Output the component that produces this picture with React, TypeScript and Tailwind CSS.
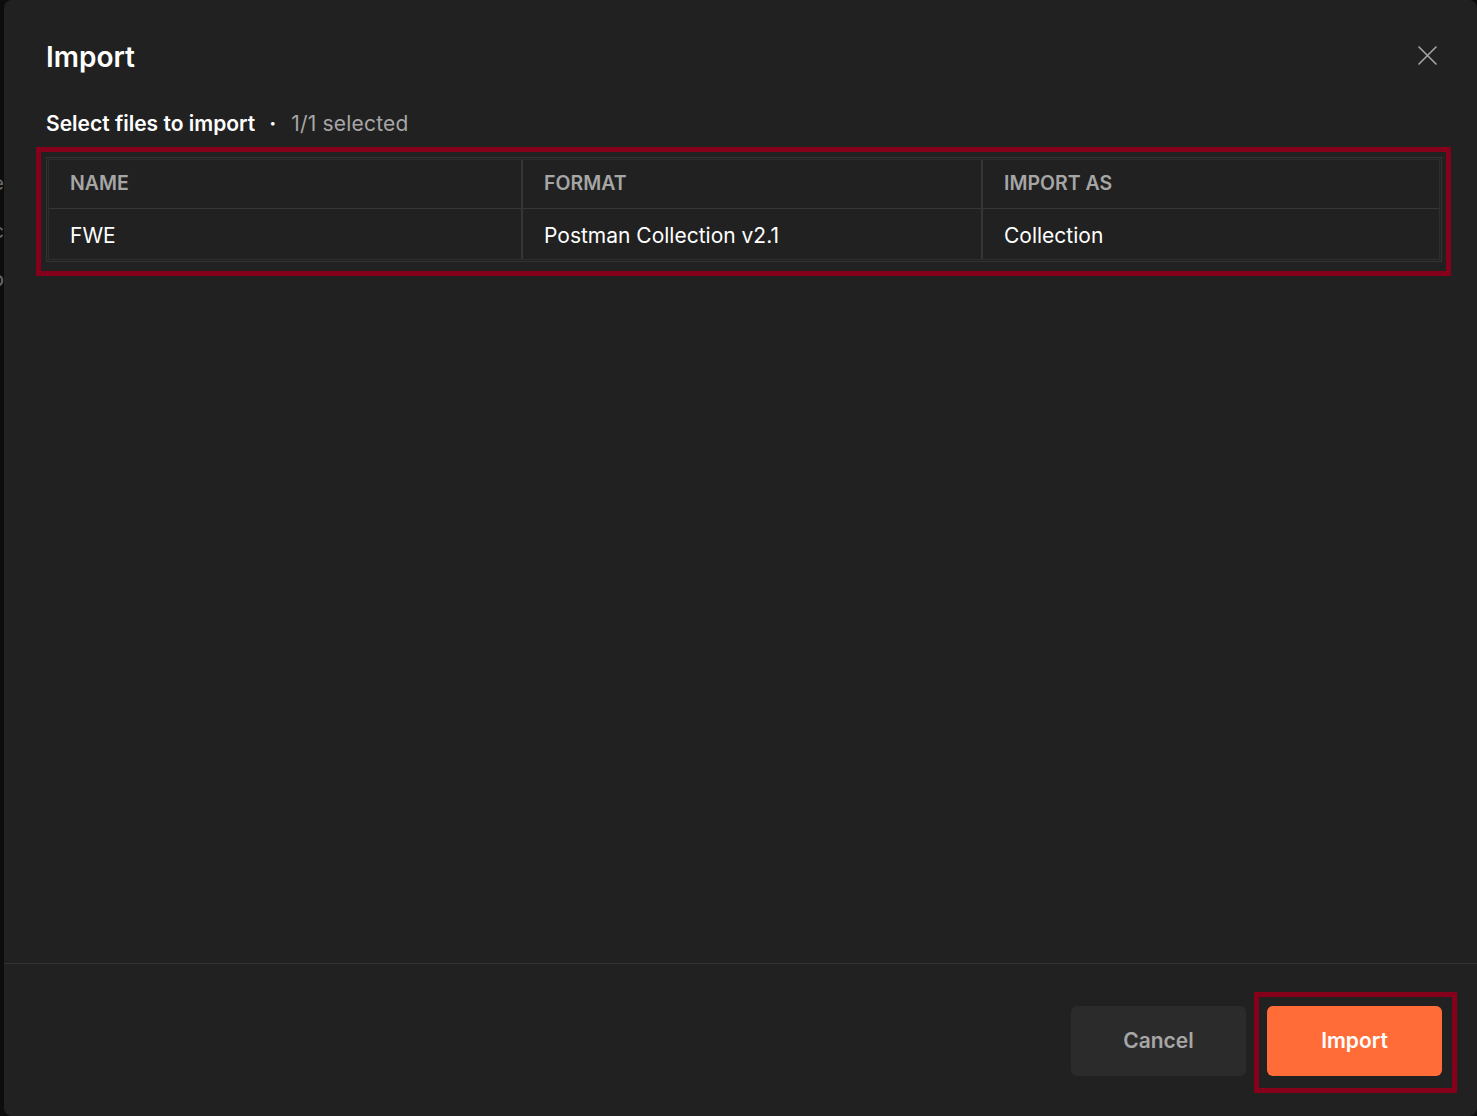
import React from "react";

const COLUMNS = ["NAME", "FORMAT", "IMPORT AS"];
const ROW = ["FWE", "Postman Collection v2.1", "Collection"];

function CloseIcon() {
  return (
    <svg width="19" height="19" viewBox="0 0 19 19" fill="none" stroke="#a6a6a6" strokeWidth="1.6" strokeLinecap="round">
      <path d="M1 1L18 18M18 1L1 18" />
    </svg>
  );
}

export default function App() {
  return (
    <div className="flex h-[1116px] w-[1477px] overflow-hidden bg-[#0d0d0d]" style={{ fontFamily: "Inter, 'Noto Sans', sans-serif" }}>
      {/* backdrop edge behind the modal */}
      <div className="flex w-[4px] shrink-0 flex-col items-end overflow-hidden pt-[159px] text-[20px] leading-[48px] text-[#6b6b6b]">
        <span className="whitespace-nowrap">Home</span>
        <span className="whitespace-nowrap">Sync</span>
        <span className="whitespace-nowrap">Help</span>
      </div>

      <div className="flex flex-1 flex-col rounded-[8px] bg-[#212121]">
        <div className="flex flex-1 flex-col pl-[42px] pr-[35px] pt-[37px]">
          <div className="flex items-center justify-between">
            <h1 className="text-[28px] font-semibold leading-[40px] text-white">Import</h1>
            <button className="-mt-[3px] mr-[5px]">
              <CloseIcon />
            </button>
          </div>

          <div className="mt-[33px] flex items-center text-[21px] leading-[28px]">
            <span className="font-semibold text-white">Select files to import</span>
            <span className="ml-[14px] mr-[15px] font-bold text-white">·</span>
            <span className="tracking-[0.2px] text-[#a6a6a6]">1/1 selected</span>
          </div>

          <div className="-ml-[10px] -mr-[9px] mt-[9px] border-[5px] border-[#85001a] pb-[9px] pl-[5px] pr-[4px] pt-[5px]">
            <div className="border border-[#333333] p-px">
              <div className="grid grid-cols-[472px_460px_1fr] border border-[#2e2e2e]">
                {COLUMNS.map((col, i) => (
                  <div
                    key={col}
                    className={
                      i === 0
                        ? "flex h-[49px] items-center border-b border-[#363636] px-[21px] text-[19.5px] font-semibold text-[#a6a6a6]"
                        : "flex h-[49px] items-center border-b border-l-2 border-[#363636] px-[21px] text-[19.5px] font-semibold text-[#a6a6a6]"
                    }
                  >
                    {col}
                  </div>
                ))}
                {ROW.map((cell, i) => (
                  <div
                    key={cell}
                    className={
                      i === 0
                        ? "flex h-[50px] items-center px-[21px] pt-[4px] text-[21px] text-white"
                        : "flex h-[50px] items-center border-l-2 border-[#363636] px-[21px] pt-[4px] text-[21px] text-white"
                    }
                  >
                    {cell}
                  </div>
                ))}
              </div>
            </div>
          </div>
        </div>

        <div className="flex justify-end gap-[21px] border-t border-[#333333] pb-[40px] pr-[35px] pt-[42px]">
          <button className="h-[70px] w-[175px] rounded-[6px] bg-[#2b2b2b] text-[21px] font-semibold text-[#a6a6a6]">
            Cancel
          </button>
          <div className="relative">
            <button className="h-[70px] w-[175px] rounded-[6px] bg-[#ff6c37] text-[21px] font-semibold text-white">
              Import
            </button>
            <div className="pointer-events-none absolute -bottom-[17px] -left-[13px] -right-[15px] -top-[14px] border-[5px] border-[#85001a]" />
          </div>
        </div>
      </div>
    </div>
  );
}
